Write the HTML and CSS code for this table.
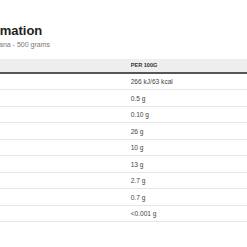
FILE: index.html
```html
<!DOCTYPE html>
<html>
<head>
<meta charset="utf-8">
<link rel="stylesheet" href="styles.css">
</head>
<body>
<div class="panel">
  <h1 class="title">Nutrition Information</h1>
  <p class="sub">Typical values for fresh Banana - 500 grams</p>
  <table class="nutrition">
    <thead>
      <tr><th class="name">Typical values</th><th class="value">Per 100g</th></tr>
    </thead>
    <tbody>
      <tr><td class="name">Energy</td><td class="value">266 kJ/63 kcal</td></tr>
      <tr><td class="name">Fat</td><td class="value">0.5 g</td></tr>
      <tr><td class="name">of which saturates</td><td class="value">0.10 g</td></tr>
      <tr><td class="name">Carbohydrate</td><td class="value">26 g</td></tr>
      <tr><td class="name">of which sugars</td><td class="value">10 g</td></tr>
      <tr><td class="name">Fibre</td><td class="value">13 g</td></tr>
      <tr><td class="name">Protein</td><td class="value">2.7 g</td></tr>
      <tr><td class="name">Salt</td><td class="value">0.7 g</td></tr>
      <tr><td class="name">Sodium</td><td class="value">&lt;0.001 g</td></tr>
    </tbody>
  </table>
</div>
</body>
</html>
```
FILE: styles.css
```css
html, body {
  margin: 0;
  padding: 0;
  background: #fff;
  overflow: hidden;
}
body {
  font-family: "Liberation Sans", Arial, sans-serif;
  color: #444;
}
.panel {
  margin-left: -87px;
  padding-top: 24px;
  width: 420px;
}
.title {
  margin: 0;
  font-size: 13px;
  line-height: 14px;
  font-weight: bold;
  color: #222;
}
.sub {
  margin: 2.7px 0 0;
  font-size: 7px;
  line-height: 8px;
  color: #777;
}
.nutrition {
  margin-top: 10.3px;
  width: 420px;
  border-collapse: collapse;
}
.nutrition th {
  background: #eeeeee;
  height: 13px;
  padding: 0 8px;
  font-size: 5.6px;
  font-weight: bold;
  text-transform: uppercase;
  text-align: left;
  color: #333;
  border-bottom: 2px solid #555;
}
.nutrition td {
  padding: 4.25px 8px;
  font-size: 6.6px;
  line-height: 7px;
  color: #444;
  border-bottom: 1px solid #e6e6e6;
}
.nutrition .name {
  width: 193.7px;
}
```
